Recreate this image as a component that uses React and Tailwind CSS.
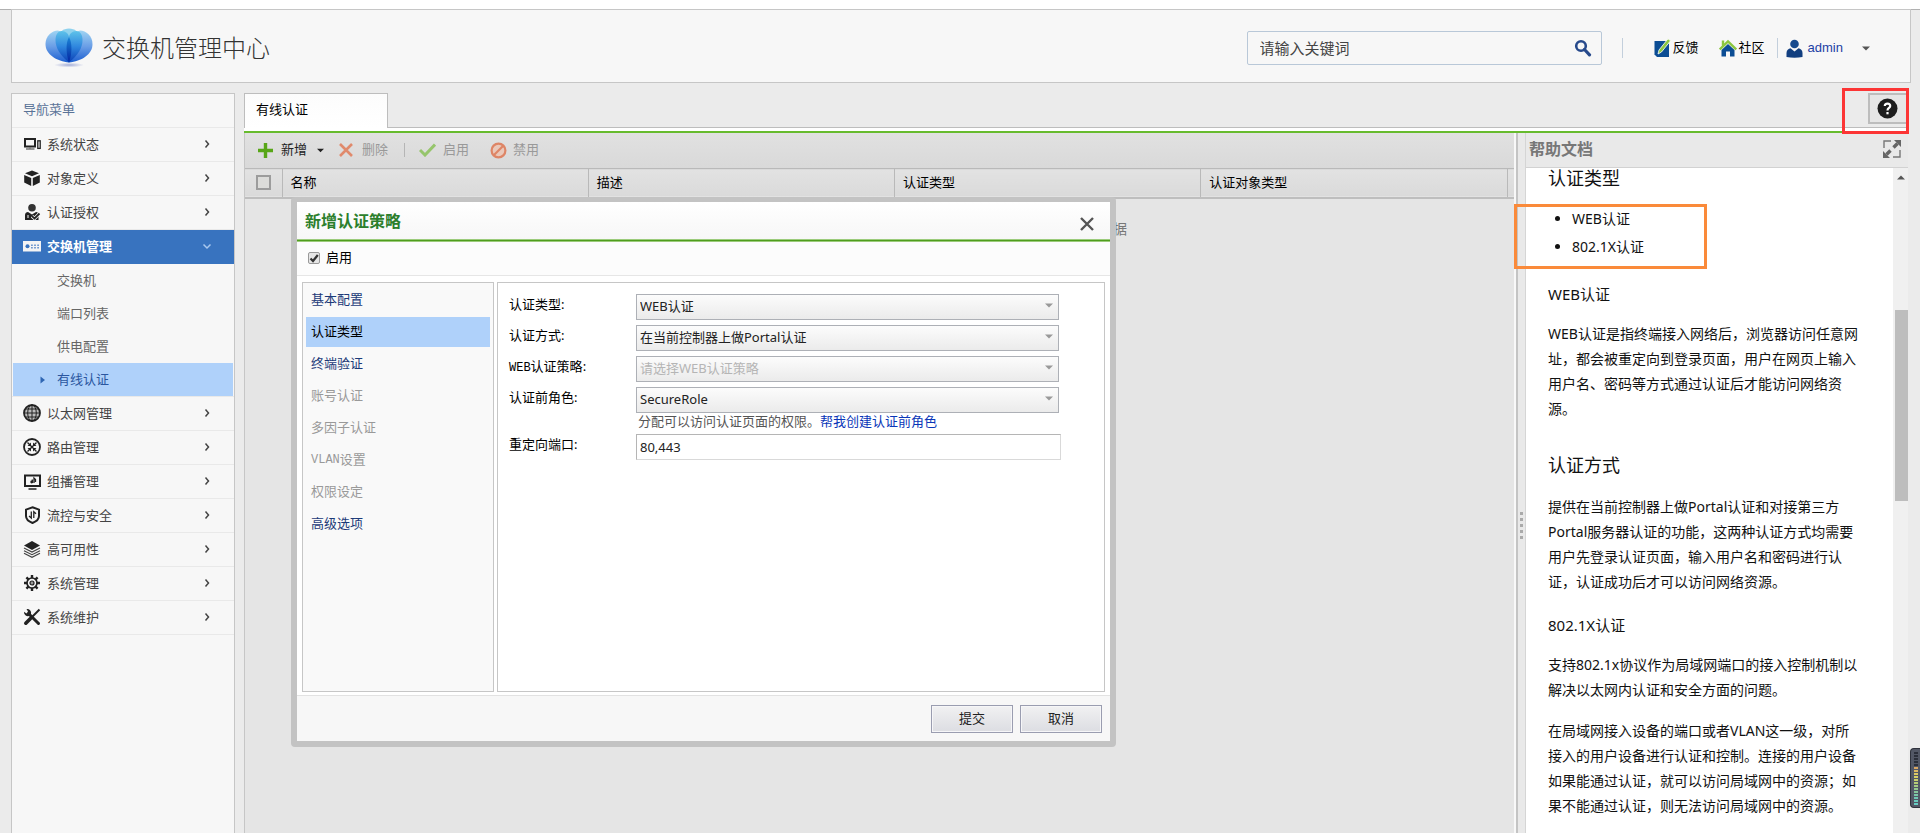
import { useState } from "react";

/* ===================== Data ===================== */

const MENU_TOP = [
  { key: "status", label: "系统状态", Icon: DevicesIcon },
  { key: "objects", label: "对象定义", Icon: CubeIcon },
  { key: "auth", label: "认证授权", Icon: UserCheckIcon },
];

const SUB_MENU = ["交换机", "端口列表", "供电配置", "有线认证"];

const MENU_BOTTOM = [
  { key: "ethernet", label: "以太网管理", Icon: GlobeIcon },
  { key: "route", label: "路由管理", Icon: RouteIcon },
  { key: "multicast", label: "组播管理", Icon: ScreenIcon },
  { key: "security", label: "流控与安全", Icon: ShieldIcon },
  { key: "ha", label: "高可用性", Icon: LayersIcon },
  { key: "system", label: "系统管理", Icon: GearIcon },
  { key: "maintain", label: "系统维护", Icon: ToolsIcon },
];

const STEPS = [
  { label: "基本配置" },
  { label: "认证类型" },
  { label: "终端验证" },
  { label: "账号认证", disabled: true },
  { label: "多因子认证", disabled: true },
  { latin: "VLAN", label: "设置", disabled: true },
  { label: "权限设定", disabled: true },
  { label: "高级选项" },
];

const COLUMNS = ["名称", "描述", "认证类型", "认证对象类型"];

/* ===================== Icons ===================== */

function Logo() {
  return (
    <svg width="48" height="40" viewBox="0 0 48 40" aria-hidden="true">
      <defs>
        <linearGradient id="petalOuter" x1="0" y1="0" x2="0" y2="1">
          <stop offset="0" stopColor="#9fd4f3" />
          <stop offset="0.5" stopColor="#6a9ee6" />
          <stop offset="1" stopColor="#1c5fd0" />
        </linearGradient>
        <linearGradient id="petalMid" x1="0" y1="0" x2="0" y2="1">
          <stop offset="0" stopColor="#5ec3ea" />
          <stop offset="0.5" stopColor="#2f86de" />
          <stop offset="1" stopColor="#0a3fb4" />
        </linearGradient>
        <linearGradient id="petalCore" x1="0" y1="0" x2="0" y2="1">
          <stop offset="0" stopColor="#1b86d8" />
          <stop offset="1" stopColor="#0322a0" />
        </linearGradient>
        <radialGradient id="logoShade">
          <stop offset="0" stopColor="#8f9bd0" stopOpacity="0.8" />
          <stop offset="1" stopColor="#8f9bd0" stopOpacity="0" />
        </radialGradient>
      </defs>
      <ellipse cx="24" cy="37" rx="15" ry="2.4" fill="url(#logoShade)" />
      <path d="M24 0.5C30 0.5 34 4 34 9L24 18L14 9C14 4 18 0.5 24 0.5Z" fill="#8fd2ee" />
      <path d="M24 34.5C12 33 0.5 27 0.5 16C0.5 8 7 2.5 13 2.5C19 4 24 14 24 34.5Z" fill="url(#petalOuter)" />
      <path d="M24 34.5C36 33 47.5 27 47.5 16C47.5 8 41 2.5 35 2.5C29 4 24 14 24 34.5Z" fill="url(#petalOuter)" />
      <path d="M24 34.5C15 27 10.5 20 10.5 12C10.5 6 13.5 3 16.5 3C21 3 24 6 24 9.5Z" fill="url(#petalMid)" />
      <path d="M24 34.5C33 27 37.5 20 37.5 12C37.5 6 34.5 3 31.5 3C27 3 24 6 24 9.5Z" fill="url(#petalMid)" />
      <path d="M24 34.5C21 26 20.5 15 24 9C27.5 15 27 26 24 34.5Z" fill="url(#petalCore)" />
    </svg>
  );
}

function Glyph({ children }) {
  return (
    <svg width="18" height="18" viewBox="0 0 18 18" fill="none" stroke="#222" className="shrink-0" aria-hidden="true">
      {children}
    </svg>
  );
}

function DevicesIcon() {
  return (
    <Glyph>
      <rect x="2" y="4" width="10" height="7.5" strokeWidth="2" />
      <path d="M7 12v2M3 14h8.5" strokeWidth="1.4" stroke="#777" />
      <rect x="14.8" y="5.8" width="2.4" height="7.6" strokeWidth="1.3" />
    </Glyph>
  );
}

function CubeIcon() {
  return (
    <Glyph>
      <g fill="#222" stroke="none">
        <path d="M9 1.5L16 4.3L9 7.3L2 4.3Z" />
        <path d="M1.2 6L8.2 9V17L1.2 13.5Z" />
        <path d="M16.8 6L9.8 9V17L16.8 13.5Z" />
      </g>
    </Glyph>
  );
}

function UserCheckIcon() {
  return (
    <Glyph>
      <circle cx="9" cy="4.8" r="3.8" fill="#333" stroke="none" />
      <path d="M2 17V12C2 10 3.5 9 5 9L9 11.5L13 9C15 9 15.5 10.5 15.5 12V17Z" fill="#222" stroke="none" />
      <path d="M9 13.2L11.5 15.5L16.5 10.5" strokeWidth="3.4" stroke="#f7f7f7" />
      <path d="M9 13.2L11.5 15.5L16.5 10.5" strokeWidth="1.8" />
      <path d="M5 12v3" stroke="#f7f7f7" />
    </Glyph>
  );
}

function SwitchIcon() {
  return (
    <Glyph>
      <rect x="0" y="4" width="18" height="10.5" fill="#f4f4f4" stroke="none" />
      <circle cx="4.5" cy="9.3" r="2" fill="#3873bf" stroke="none" />
      <path d="M8 8.3h8M8 10.8h8" stroke="#6f98cf" strokeWidth="1.4" strokeDasharray="1.8 1.3" />
    </Glyph>
  );
}

function GlobeIcon() {
  return (
    <Glyph>
      <circle cx="9" cy="9" r="8" strokeWidth="1.8" fill="#bbb" />
      <ellipse cx="9" cy="9" rx="4.3" ry="8" />
      <path d="M9 1v16M1 9h16M2.5 5h13M2.5 13h13" />
    </Glyph>
  );
}

function RouteIcon() {
  return (
    <Glyph>
      <circle cx="9" cy="9" r="8" strokeWidth="1.8" />
      <path d="M4.5 4.5l9 9M13.5 4.5l-9 9" strokeWidth="1.4" />
      <path d="M4.5 8H8V4.5ZM13.5 8H10V4.5ZM4.5 10H8V13.5ZM13.5 10H10V13.5Z" fill="#222" stroke="none" />
    </Glyph>
  );
}

function ScreenIcon() {
  return (
    <Glyph>
      <rect x="2" y="3.5" width="15" height="10.5" strokeWidth="2" />
      <path d="M5.5 17h8" strokeWidth="1.5" />
      <path d="M9.3 11V7.5M11 11V6L12.5 7.5V10" strokeWidth="1.3" />
      <circle cx="8.7" cy="10" r="1.4" fill="#222" stroke="none" />
    </Glyph>
  );
}

function ShieldIcon() {
  return (
    <Glyph>
      <path d="M9.5 1.2L16 3.6V10C16 13.5 13 15.6 9.5 17C6 15.6 3 13.5 3 10V3.6Z" strokeWidth="2" />
      <path d="M8.3 5.5V12L6 10M10.8 12V5.8L13 7.8" strokeWidth="1.3" />
    </Glyph>
  );
}

function LayersIcon() {
  return (
    <Glyph>
      <path d="M9 1L17 5.5L9 10L1 5.5Z" fill="#222" stroke="none" />
      <path d="M1 8L9 12L17 8M1 10.7L9 14.7L17 10.7M1 13.3L9 17.3L17 13.3" strokeWidth="1.2" stroke="#444" />
    </Glyph>
  );
}

function GearIcon() {
  return (
    <Glyph>
      <path d="M9 1v16M1 9h16M3.4 3.4l11.2 11.2M14.6 3.4L3.4 14.6" strokeWidth="2.4" />
      <circle cx="9" cy="9" r="5" fill="#f7f7f7" strokeWidth="1.7" />
      <circle cx="9" cy="9" r="2" fill="#999" strokeWidth="1.2" />
    </Glyph>
  );
}

function ToolsIcon() {
  return (
    <Glyph>
      <path d="M6 6L15.5 15.5" strokeWidth="3" strokeLinecap="round" />
      <path d="M3.5 1A4 4 0 0 1 8 6L6 8A4 4 0 0 1 1 3.8L3.5 5.5L5 3.5Z" fill="#222" stroke="none" />
      <path d="M16.5 1.5L8.5 9.5" strokeWidth="2" />
      <path d="M7.5 10.5L2.8 15.2" strokeWidth="3.6" strokeLinecap="round" />
    </Glyph>
  );
}

function Chevron({ open }) {
  return (
    <svg width="10" height="10" viewBox="0 0 10 10" fill="none" strokeWidth="1.5" className="ml-auto shrink-0" aria-hidden="true">
      {open ? (
        <path d="M1.5 3.5L5 7L8.5 3.5" stroke="#a9c8ee" />
      ) : (
        <path d="M3.5 1.5L6.5 5L3.5 8.5" stroke="#444" />
      )}
    </svg>
  );
}

function Caret({ className }) {
  return (
    <svg width="8" height="5" viewBox="0 0 8 5" className={className} aria-hidden="true">
      <path d="M0 0.5H8L4 4.5Z" fill="currentColor" />
    </svg>
  );
}

/* ===================== Header ===================== */

function Header() {
  return (
    <header className="mr-[9px] flex h-[74px] shrink-0 items-center border border-[#c6c6c6] bg-[#f7f7f7] pt-[4px] pr-[40px] pl-[33px]">
      <Logo />
      <h1 className="ml-[9px] text-[24px] leading-[32px] font-light text-[#333]">
        交换机管理中心
      </h1>

      <form className="ml-auto flex h-[34px] w-[355px] items-center rounded-[2px] border border-[#b9c8d8]">
        <input
          aria-label="搜索"
          placeholder="请输入关键词"
          className="min-w-0 flex-1 bg-transparent pl-[12px] text-[15px] leading-[30px] outline-none placeholder:text-[#444]"
        />
        <button type="button" aria-label="搜索" className="mr-[9px]">
          <svg width="18" height="18" viewBox="0 0 18 18" fill="none" stroke="#274a8c" aria-hidden="true">
            <circle cx="7" cy="7" r="4.8" strokeWidth="2.6" />
            <path d="M10.5 10.5L15.5 15.8" strokeWidth="3.2" strokeLinecap="round" />
          </svg>
        </button>
      </form>

      <div className="ml-[20px] h-[20px] w-px bg-[#c3cfdc]" />

      <a href="#feedback" className="ml-[31px] flex items-center gap-[2px] text-[13px] text-black">
        <svg width="17" height="20" viewBox="0 0 17 20" aria-hidden="true">
          <path d="M3 3H12L15 6V19H3L0.5 16.5V3Z" fill="#0c4d94" />
          <path d="M14 0.8L16.5 2.8L7.5 14L4 16L5 12Z" fill="#8cc63f" stroke="#fff" strokeWidth="0.8" />
        </svg>
        反馈
      </a>
      <a href="#community" className="ml-[20px] flex items-center gap-[2px] text-[13px] text-black">
        <svg width="18" height="18" viewBox="0 0 18 18" aria-hidden="true">
          <path d="M9 5L15.5 11V17.5H11V12.5H7V17.5H2.5V11Z" fill="#0c4d94" />
          <path d="M0.8 10.5L9 2.5L17.2 10.5M4 6.5V1.5" stroke="#8cc63f" strokeWidth="2.4" fill="none" />
        </svg>
        社区
      </a>
      <div className="ml-[12px] h-[20px] w-px bg-[#c3cfdc]" />
      <button type="button" className="ml-[8px] flex items-center text-[13px] text-[#1c3fa5]">
        <svg width="17" height="19" viewBox="0 0 17 19" aria-hidden="true">
          <circle cx="8.5" cy="5" r="4.3" fill="#164a8e" />
          <path d="M0.5 18V14C0.5 11 2.5 9.5 4.5 9.2L8.5 12.5L12.5 9.2C14.5 9.5 16.5 11 16.5 14V18Q8.5 19.5 0.5 18Z" fill="#123f80" />
        </svg>
        <span className="ml-[5px] font-['Liberation_Sans',sans-serif]">admin</span>
        <Caret className="ml-[19px] text-[#555]" />
      </button>
    </header>
  );
}

/* ===================== Sidebar ===================== */

function MenuItem({ item }) {
  const { Icon, label } = item;
  return (
    <li className="border-b border-[#e9e9e9]">
      <button type="button" className="flex h-[33px] w-full items-center pr-[22px] pb-[2px] pl-[11px] text-left text-[#444]">
        <Icon />
        <span className="ml-[6px] leading-[20px]">{label}</span>
        <Chevron />
      </button>
    </li>
  );
}

function Sidebar() {
  const [current, setCurrent] = useState("有线认证");

  return (
    <nav className="w-[224px] shrink-0 border border-b-0 border-[#c6c6c6] bg-[#f7f7f7] text-[13px]">
      <h2 className="flex h-[34px] items-center border-b border-[#e9e9e9] pb-[2px] pl-[11px] text-[#5a7397]">
        导航菜单
      </h2>
      <ul>
        {MENU_TOP.map((item) => (
          <MenuItem key={item.key} item={item} />
        ))}
        <li className="border-b border-[#e9e9e9]">
          <button
            type="button"
            className="flex h-[34px] w-full items-center bg-[#3873bf] pr-[22px] pb-[2px] pl-[11px] text-left font-bold text-white"
          >
            <SwitchIcon />
            <span className="ml-[6px] leading-[20px]">交换机管理</span>
            <Chevron open />
          </button>
          <ul className="px-px">
            {SUB_MENU.map((name) => (
              <li key={name}>
                <button
                  type="button"
                  onClick={() => setCurrent(name)}
                  className={`flex h-[33px] w-full items-center pl-[27px] text-left ${
                    name === current ? "bg-[#afd1fa] text-[#2b569f]" : "text-[#666]"
                  }`}
                >
                  <svg width="5" height="8" viewBox="0 0 5 8" className="mr-[12px]" aria-hidden="true">
                    {name === current && <path d="M0.5 0.5L5 4L0.5 7.5Z" fill="#2f66b3" />}
                  </svg>
                  {name}
                </button>
              </li>
            ))}
          </ul>
        </li>
        {MENU_BOTTOM.map((item) => (
          <MenuItem key={item.key} item={item} />
        ))}
      </ul>
    </nav>
  );
}

/* ===================== Policy list ===================== */

function Toolbar() {
  return (
    <div className="flex h-[35px] shrink-0 items-center bg-linear-to-b from-[#e1e1e1] to-[#d9d9d9] pb-px pl-[13px] text-[13px] text-[#999]">
      <button type="button" className="flex items-center text-[#222]">
        <svg width="15" height="15" viewBox="0 0 15 15" aria-hidden="true">
          <path d="M7.5 0V15M0 7.5H15" stroke="#58a618" strokeWidth="3.4" />
        </svg>
        <span className="ml-[8px]">新增</span>
        <Caret className="ml-[10px] w-[7px] text-[#222]" />
      </button>
      <button type="button" disabled className="ml-[15px] flex items-center">
        <svg width="14" height="14" viewBox="0 0 14 14" aria-hidden="true">
          <path d="M1 1L13 13M13 1L1 13" stroke="#e08a6c" strokeWidth="2.6" />
        </svg>
        <span className="ml-[9px]">删除</span>
      </button>
      <div className="ml-[16px] h-[14px] w-px bg-[#b5b5b5]" />
      <button type="button" disabled className="ml-[14px] flex items-center">
        <svg width="17" height="14" viewBox="0 0 17 14" aria-hidden="true">
          <path d="M1 7L6 12L16 1.5" fill="none" stroke="#96c56c" strokeWidth="3" />
        </svg>
        <span className="ml-[7px]">启用</span>
      </button>
      <button type="button" disabled className="ml-[21px] flex items-center">
        <svg width="17" height="17" viewBox="0 0 17 17" aria-hidden="true">
          <circle cx="8.5" cy="8.5" r="6.9" fill="#eac9bb" stroke="#de8566" strokeWidth="2.2" />
          <path d="M4 13L13 4" stroke="#de8566" strokeWidth="2.2" />
        </svg>
        <span className="ml-[6px]">禁用</span>
      </button>
    </div>
  );
}

function PolicyTable() {
  return (
    <table className="w-full table-fixed border-collapse text-[13px]">
      <colgroup>
        <col className="w-[37px]" />
        {COLUMNS.map((c) => (
          <col key={c} />
        ))}
        <col className="w-[7px]" />
      </colgroup>
      <thead>
        <tr className="h-[29px] border-t border-b-2 border-t-[#b9b9b9] border-b-[#bebebe] bg-linear-to-b from-[#e2e2e2] to-[#dadada]">
          <th className="border-r border-[#b9b9b9] p-0">
            <input
              type="checkbox"
              aria-label="全选"
              className="mx-auto block size-[15px] appearance-none border-2 border-[#9c9c9c] bg-[#dcdcda]"
            />
          </th>
          {COLUMNS.map((c) => (
            <th key={c} className="border-r border-[#b9b9b9] p-0 pl-[8px] text-left font-normal">
              {c}
            </th>
          ))}
          <th className="p-0" />
        </tr>
      </thead>
      <tbody>
        <tr>
          <td colSpan={6} className="h-[60px] p-0 pl-[826px] text-[14px] text-[#777]">
            没有数据
          </td>
        </tr>
      </tbody>
    </table>
  );
}

/* ===================== Dialog ===================== */

function SelectRow({ id, latin, label, value, muted }) {
  return (
    <div className="flex">
      <label htmlFor={id} className="w-[127px] shrink-0 leading-[20px]">
        {latin && <span className="font-['Liberation_Mono',monospace] text-[12px]">{latin}</span>}
        {label}:
      </label>
      <div className="relative w-[423px]">
        <select
          id={id}
          className={`block h-[26px] w-full appearance-none border border-[#adb0b6] bg-linear-to-b from-[#fcfcfc] to-[#ebebeb] pl-[3px] text-[13px] outline-none ${
            muted ? "text-[#b5b5b5]" : "text-[#222]"
          }`}
        >
          <option>{value}</option>
        </select>
        <Caret className="pointer-events-none absolute top-[9px] right-[6px] text-[#999]" />
      </div>
    </div>
  );
}

function PolicyDialog() {
  const [enabled, setEnabled] = useState(true);
  const [step, setStep] = useState("认证类型");

  return (
    <div
      role="dialog"
      aria-label="新增认证策略"
      className="absolute top-[64px] left-[47px] flex h-[550px] w-[825px] flex-col rounded-[4px] border-[6px] border-t-[5px] border-[#c3c3c3] bg-white text-[13px]"
    >
      <div className="flex h-[37px] shrink-0 items-center bg-linear-to-b from-white to-[#f7f7f7] pr-[15px] pl-[8px]">
        <h2 className="text-[16px] font-bold text-[#2c7f2c]">新增认证策略</h2>
        <button type="button" aria-label="关闭" className="ml-auto pt-[6px]">
          <svg width="16" height="16" viewBox="0 0 16 16" aria-hidden="true">
            <path d="M2 2L14 14M14 2L2 14" stroke="#555" strokeWidth="2.4" />
          </svg>
        </button>
      </div>
      <div className="h-[3px] shrink-0 border-y border-[#9bcb7b] bg-[#4f9d1d]" />

      <div className="flex h-[34px] shrink-0 items-center border-b border-[#e6e6e6] bg-[#fcfcfc] pb-px pl-[11px]">
        <span className="relative flex size-[12px]">
          <input
            id="enabled"
            type="checkbox"
            checked={enabled}
            onChange={(e) => setEnabled(e.target.checked)}
            className="size-[12px] appearance-none rounded-[2px] border border-[#999] bg-[#e6e6e6]"
          />
          {enabled && (
            <svg width="12" height="12" viewBox="0 0 12 12" className="pointer-events-none absolute inset-0" aria-hidden="true">
              <path d="M2.5 6.5L5 9L9.8 3" fill="none" stroke="#333" strokeWidth="2.2" />
            </svg>
          )}
        </span>
        <label htmlFor="enabled" className="ml-[6px]">
          启用
        </label>
      </div>

      <div className="flex min-h-0 flex-1 gap-[3px] px-[5px] pt-[6px] pb-[3px]">
        <ul className="flex w-[192px] shrink-0 flex-col gap-[2px] border border-[#c6c6c6] bg-[#f9f9f9] px-[3px] pt-[2px]">
          {STEPS.map((s) => (
            <li key={s.label}>
              <button
                type="button"
                disabled={s.disabled}
                onClick={() => setStep(s.label)}
                className={`flex h-[30px] w-full items-center pl-[5px] text-left ${
                  s.label === step ? "bg-[#afd1fa] text-black" : s.disabled ? "text-[#999]" : "text-[#1c3a78]"
                }`}
              >
                {s.latin && (
                  <span className="font-['Liberation_Mono',monospace] text-[12px]">{s.latin}</span>
                )}
                {s.label}
              </button>
            </li>
          ))}
        </ul>

        <div className="flex flex-1 flex-col gap-[5px] border border-[#c6c6c6] pt-[11px] pl-[11px]">
          <SelectRow id="authType" label="认证类型" value="WEB认证" />
          <SelectRow id="authMode" label="认证方式" value="在当前控制器上做Portal认证" />
          <SelectRow id="webPolicy" latin="WEB" label="认证策略" value="请选择WEB认证策略" muted />
          <SelectRow id="preRole" label="认证前角色" value="SecureRole" />
          <p className="-mt-[5px] pl-[129px] leading-[16px] text-[#555]">
            分配可以访问认证页面的权限。
            <a href="#role" className="text-[#0a36b8]">
              帮我创建认证前角色
            </a>
          </p>
          <div className="flex">
            <label htmlFor="port" className="w-[127px] shrink-0 leading-[20px]">
              重定向端口:
            </label>
            <input
              id="port"
              defaultValue="80,443"
              className="h-[26px] w-[425px] border border-[#d9d9d9] border-t-[#b5b5b5] border-l-[#b5b5b5] pl-[3px] text-[13px] text-[#222] outline-none"
            />
          </div>
        </div>
      </div>

      <div className="flex h-[46px] shrink-0 items-center justify-end gap-[7px] border-t border-[#e2e2e2] bg-[#f7f7f7] pr-[8px]">
        {["提交", "取消"].map((text) => (
          <button
            key={text}
            type="button"
            className="h-[28px] w-[82px] border border-[#9a9db0] bg-linear-to-b from-[#f1f1f2] to-[#dcdde2] text-[#222] shadow-[inset_0_0_0_1px_#f6f6f8]"
          >
            {text}
          </button>
        ))}
      </div>
    </div>
  );
}

/* ===================== Help panel ===================== */

function HelpPanel() {
  return (
    <aside className="flex w-[394px] shrink-0 border-l-2 border-[#f8f8f8] bg-[#e9e9e9]">
      <div className="flex w-[10px] shrink-0 flex-col items-center justify-center gap-[3px] border-r border-l-2 border-r-[#d5d5d5] border-l-[#c4c4c4] pt-[84px]">
        {[0, 1, 2, 3, 4].map((i) => (
          <i key={i} className="size-[3px] bg-[#aaa]" />
        ))}
      </div>
      <div className="flex min-w-0 flex-1 flex-col">
        <div className="flex h-[34px] shrink-0 items-center justify-between pr-[7px] pb-[2px] pl-[3px]">
          <h2 className="text-[16px] leading-[22px] font-bold text-[#777]">帮助文档</h2>
          <button type="button" aria-label="展开">
            <svg width="18" height="18" viewBox="0 0 18 18" fill="none" stroke="#777" aria-hidden="true">
              <path d="M1 8V1H8M17 10V17H10" strokeWidth="1.4" />
              <path d="M3.5 14.5L7.5 10.5M10.5 7.5L14.5 3.5" strokeWidth="3.4" stroke="#666" />
              <path d="M11 0H18V7ZM0 11V18H7Z" fill="#666" stroke="none" />
            </svg>
          </button>
        </div>
        <div className="flex min-h-0 flex-1 border-t border-[#d2d2d2]">
          <article className="flex-1 overflow-hidden bg-white pr-[33px] pl-[22px] text-[14px] leading-[25px] text-[#111]">
            <h2 className="text-[18px] leading-[20px]">认证类型</h2>
            <ul className="mt-[17px] list-disc pl-[24px] leading-[28px]">
              <li>WEB认证</li>
              <li>802.1X认证</li>
            </ul>
            <h3 className="mt-[21px] text-[15px]">WEB认证</h3>
            <p className="mt-[14px]">
              WEB认证是指终端接入网络后，浏览器访问任意网址，都会被重定向到登录页面，用户在网页上输入用户名、密码等方式通过认证后才能访问网络资源。
            </p>
            <h2 className="mt-[32px] text-[18px]">认证方式</h2>
            <p className="mt-[16px]">
              提供在当前控制器上做Portal认证和对接第三方Portal服务器认证的功能，这两种认证方式均需要用户先登录认证页面，输入用户名和密码进行认证，认证成功后才可以访问网络资源。
            </p>
            <h3 className="mt-[19px] text-[15px]">802.1X认证</h3>
            <p className="mt-[14px]">
              支持802.1x协议作为局域网端口的接入控制机制以解决以太网内认证和安全方面的问题。
            </p>
            <p className="mt-[16px]">
              在局域网接入设备的端口或者VLAN这一级，对所接入的用户设备进行认证和控制。连接的用户设备如果能通过认证，就可以访问局域网中的资源；如果不能通过认证，则无法访问局域网中的资源。
            </p>
          </article>
          <div className="flex w-[15px] shrink-0 flex-col items-end bg-[#f0f0f0]">
            <svg width="8" height="5" viewBox="0 0 8 5" className="mt-[7px] mr-[3px] shrink-0" aria-hidden="true">
              <path d="M0 4.5H8L4 0.5Z" fill="#555" />
            </svg>
            <div className="mt-[130px] h-[191px] w-[13px] shrink-0 bg-[#bdbdbd]" />
          </div>
        </div>
      </div>
      <div className="absolute top-[71px] right-[201px] h-[65px] w-[193px] border-[3px] border-[#fa8a3a]" />
    </aside>
  );
}

/* ===================== Meter docked at the window edge ===================== */

const METER = [
  "#2b2f3a", "#2b2f3a", "#2b2f3a", "#2b2f3a", "#2b2f3a",
  "#d9a662", "#dcb862", "#dcc864", "#d6cf66", "#c8cf6c",
  "#b6cd76", "#a5cb82", "#95c98f", "#86c79b", "#7ac8a8",
  "#70c9b4", "#6acbbd", "#66cdc4",
];

function EdgeMeter() {
  return (
    <div className="fixed top-[748px] right-0 flex h-[60px] w-[10px] flex-col items-center justify-center gap-px rounded-l-[4px] border border-r-0 border-[#2f323c] bg-[#525765]">
      {METER.map((color, i) => (
        <i key={i} className="h-[2px] w-[4px]" style={{ backgroundColor: color }} />
      ))}
    </div>
  );
}

/* ===================== Page ===================== */

export default function App() {
  return (
    <div className="flex h-screen flex-col overflow-hidden bg-[#ebebeb] font-['Noto_Sans','Noto_Sans_CJK_SC',sans-serif] text-black">
      <div className="h-[10px] shrink-0 border-b border-[#b0b0b0] bg-white" />
      <div className="-mt-px flex min-h-0 flex-1 flex-col pl-[11px]">
        <Header />
        <div className="mt-[10px] flex min-h-0 flex-1 gap-[9px] pr-[12px]">
          <Sidebar />
          <main className="flex min-w-0 flex-1 flex-col">
            <div className="flex h-[35px] shrink-0">
              <button
                type="button"
                aria-current="page"
                className="flex w-[144px] items-center border border-b-0 border-[#bdbdbd] bg-linear-to-b from-[#fcfcfc] to-white pb-[2px] pl-[11px] text-[13px]"
              >
                有线认证
              </button>
              <div className="relative flex flex-1 justify-end border-b border-[#bdbdbd]">
                <button
                  type="button"
                  aria-label="帮助"
                  className="mr-px flex h-[31px] w-[39px] items-center justify-center border-2 border-r-0 border-[#bdbdbd] bg-[#e6e6e6] pr-[2px]"
                >
                  <svg width="21" height="21" viewBox="0 0 21 21" aria-hidden="true">
                    <circle cx="10.5" cy="10.5" r="10" fill="#1d1d1d" />
                    <path d="M7.8 8C7.8 4.8 13.2 4.8 13.2 8C13.2 10 10.5 10 10.5 12.5" fill="none" stroke="#fff" strokeWidth="2.2" />
                    <rect x="9.4" y="14" width="2.2" height="2.3" fill="#fff" />
                  </svg>
                </button>
                <div className="absolute -top-[5px] -right-px z-10 h-[46px] w-[67px] border-[3px] border-[#fc3535]" />
              </div>
            </div>
            <div className="h-[5px] shrink-0 border-b-2 border-[#67bb2e] bg-white" />

            <div className="relative flex min-h-0 flex-1">
              <section className="flex min-w-0 flex-1 flex-col border-l border-[#c6c6c6] bg-[#e5e5e5]">
                <Toolbar />
                <PolicyTable />
                <PolicyDialog />
              </section>
              <HelpPanel />
            </div>
          </main>
        </div>
      </div>
      <EdgeMeter />
    </div>
  );
}
